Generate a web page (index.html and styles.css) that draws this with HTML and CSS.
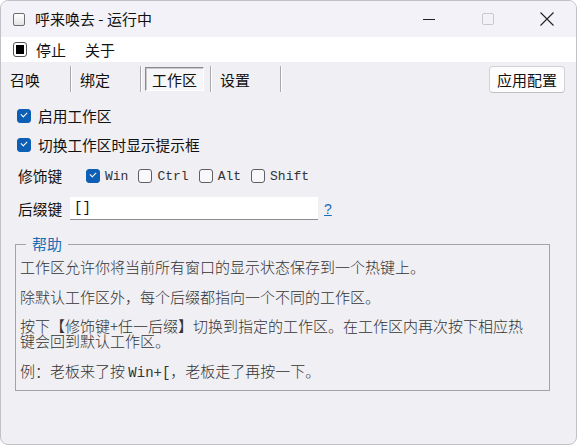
FILE: index.html
```html
<!DOCTYPE html>
<html lang="zh-CN">
<head>
  <meta charset="UTF-8" />
  <title>呼来唤去 - 运行中</title>
  <link rel="stylesheet" href="styles.css">
</head>
<body>
  <div class="window">
    <div class="titlebar">
      <span class="app-icon"></span>
      <span class="title">呼来唤去 - 运行中</span>
      <div class="controls">
        <span class="ctl">
          <svg width="16" height="16" viewBox="0 0 16 16"><path d="M2 8.5h12" stroke="#222" stroke-width="1"/></svg>
        </span>
        <span class="ctl">
          <svg width="16" height="16" viewBox="0 0 16 16"><rect x="2.5" y="2.5" width="11" height="11" rx="1.5" fill="none" stroke="#c8c8cc"/></svg>
        </span>
        <span class="ctl">
          <svg width="16" height="16" viewBox="0 0 16 16"><path d="M1.5 1.5l13 13M14.5 1.5l-13 13" stroke="#222" stroke-width="1.1"/></svg>
        </span>
      </div>
    </div>

    <div class="menubar">
      <span class="menu-item"><span class="stop-icon"></span>停止</span>
      <span class="menu-item">关于</span>
    </div>

    <div class="content">
      <div class="tabbar">
        <div class="tab">召唤</div>
        <div class="tab">绑定</div>
        <div class="tab active"><span>工作区</span></div>
        <div class="tab">设置</div>
        <button class="apply-btn">应用配置</button>
      </div>

      <div class="form">
        <div class="row">
          <label class="check"><span class="box on"></span>启用工作区</label>
        </div>
        <div class="row">
          <label class="check"><span class="box on"></span>切换工作区时显示提示框</label>
        </div>
        <div class="row tall">
          <span class="label">修饰键</span>
          <label class="check mod"><span class="box on"></span><span class="mono">Win</span></label>
          <label class="check mod"><span class="box"></span><span class="mono">Ctrl</span></label>
          <label class="check mod"><span class="box"></span><span class="mono">Alt</span></label>
          <label class="check mod"><span class="box"></span><span class="mono">Shift</span></label>
        </div>
        <div class="row tall">
          <span class="label">后缀键</span>
          <input class="key-input" type="text" value="[]" />
          <a class="help-link" href="#">?</a>
        </div>
      </div>

      <fieldset class="help">
        <legend>帮助</legend>
        <p>工作区允许你将当前所有窗口的显示状态保存到一个热键上。</p>
        <p>除默认工作区外，每个后缀都指向一个不同的工作区。</p>
        <p>按下【修饰键+任一后缀】切换到指定的工作区。在工作区内再次按下相应热键会回到默认工作区。</p>
        <p>例：老板来了按 <span class="mono-inline">Win+[</span>，老板走了再按一下。</p>
      </fieldset>
    </div>
  </div>
</body>
</html>
```

FILE: styles.css
```css
* {
  box-sizing: border-box;
}

body {
  margin: 0;
  background-color: #ffffff;
  font-family: 'Noto Sans CJK SC', 'Noto Sans', sans-serif;
  color: #111;
}

.window {
  width: 577px;
  height: 445px;
  border: 1px solid #c2c1c8;
  border-radius: 8px;
  overflow: hidden;
  background-color: #f0eff3;
  display: flex;
  flex-direction: column;
}

.titlebar {
  height: 36px;
  background-color: #f3f2f8;
  display: flex;
  align-items: center;
  padding-left: 12px;
  flex-shrink: 0;
}

.app-icon {
  width: 12px;
  height: 13px;
  border: 1px solid #6e6e6e;
  border-radius: 2px;
  background: linear-gradient(#ffffff, #e4e4e4);
}

.title {
  font-size: 15px;
  margin-left: 10px;
  line-height: 20px;
}

.controls {
  margin-left: auto;
  display: flex;
  height: 100%;
}

.ctl {
  width: 59px;
  display: flex;
  align-items: center;
  justify-content: center;
}

.ctl svg {
  display: block;
}

.menubar {
  height: 25px;
  background-color: #ffffff;
  display: flex;
  align-items: center;
  padding-left: 12px;
  flex-shrink: 0;
}

.menu-item {
  display: flex;
  align-items: center;
  font-size: 15px;
  line-height: 20px;
  margin-right: 19px;
}

.stop-icon {
  width: 14px;
  height: 15px;
  border: 1px solid #555;
  border-radius: 3px;
  background-color: #fff;
  margin-right: 9px;
  display: flex;
  align-items: center;
  justify-content: center;
}

.stop-icon::after {
  content: "";
  width: 8px;
  height: 9px;
  background-color: #000;
}

.content {
  flex: 1;
  display: flex;
  flex-direction: column;
}

.tabbar {
  height: 34px;
  display: flex;
  align-items: center;
  flex-shrink: 0;
}

.tab {
  width: 70px;
  height: 26px;
  display: flex;
  align-items: center;
  padding-left: 9px;
  font-size: 15px;
  border-right: 1px solid #a9a9ad;
  box-shadow: 1px 0 0 #ffffff;
}

.tab.active {
  padding-left: 4px;
}

.tab.active span {
  height: 24px;
  width: 59px;
  display: flex;
  align-items: center;
  justify-content: center;
  border: 1px solid #fff;
  border-top-color: #8a8a8e;
  border-left-color: #8a8a8e;
  box-shadow: inset 1px 1px 0 #c9c9cc;
  background-color: #f6f6f8;
}

.apply-btn {
  margin-left: auto;
  margin-right: 11px;
  height: 27px;
  width: 76px;
  font-family: inherit;
  font-size: 15px;
  color: #111;
  background-color: #fdfdfd;
  border: 1px solid #d2d2d6;
  border-bottom-color: #c0c0c4;
  border-radius: 4px;
  padding: 0;
  margin-top: 1px;
}

.form {
  padding: 5px 0 0 16px;
}

.row {
  height: 29px;
  display: flex;
  align-items: center;
}

.row.tall {
  height: 33px;
}

.check {
  display: flex;
  align-items: center;
  font-size: 14.7px;
  line-height: 20px;
}

.box {
  width: 14px;
  height: 14px;
  border-radius: 3px;
  border: 1px solid #606064;
  background-color: #f8f8fa;
  margin-right: 7px;
  position: relative;
}

.box.on {
  background-color: #0c5fb4;
  border-color: #0c5fb4;
}

.box.on::after {
  content: "";
  position: absolute;
  left: 3px;
  top: 2px;
  width: 5px;
  height: 3px;
  border-left: 1.3px solid #fff;
  border-bottom: 1.3px solid #fff;
  transform: rotate(-45deg);
}

.label {
  font-size: 14.7px;
  width: 69px;
  padding-left: 1px;
}

.check.mod {
  margin-right: 10px;
}

.check.mod .box {
  margin-right: 5px;
}

.mono {
  font-family: 'Liberation Mono', monospace;
  font-size: 13px;
  color: #333;
  margin-top: 2px;
}

.key-input {
  width: 248px;
  height: 23px;
  margin-left: -16px;
  border: none;
  border-bottom: 1px solid #8c8c90;
  background-color: #fff;
  font-family: 'Liberation Mono', monospace;
  font-size: 14px;
  padding: 0 4px;
  color: #111;
}

.help-link {
  margin-left: 6px;
  color: #1a6bb8;
  font-size: 14px;
  font-family: 'Liberation Sans', sans-serif;
}

.help {
  margin: 9px 26px 0 14px;
  border: 1px solid #a4a4a8;
  padding: 5px 24px 9px 4px;
}

.help legend {
  font-size: 15px;
  line-height: 20px;
  color: #1b6db4;
  margin-left: 6px;
  padding: 0 6px;
}

.help p {
  margin: 0 0 14.5px 0;
  font-size: 15px;
  line-height: 15px;
  font-weight: 300;
  color: #333;
}

.help p:last-child {
  margin-bottom: 0;
}

.mono-inline {
  font-family: 'Liberation Mono', monospace;
  font-size: 14px;
}
```
